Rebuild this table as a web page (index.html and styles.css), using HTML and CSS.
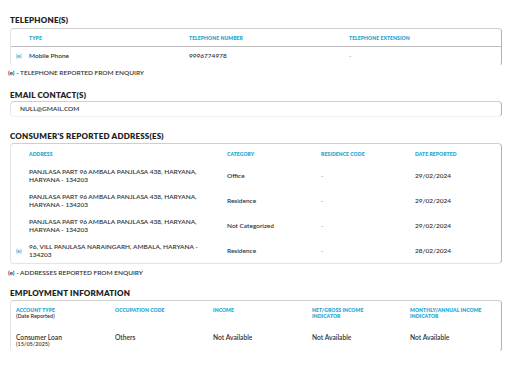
FILE: index.html
```html
<!DOCTYPE html>
<html>
<head>
<meta charset="utf-8">
<link rel="stylesheet" href="styles.css">
</head>
<body>
<div class="page">
  <h2 class="sec-title t-phone">TELEPHONE(S)</h2>
  <div class="card phone-card">
    <div class="grid phone-grid head-row sep">
      <span></span><span class="th">TYPE</span><span class="th">TELEPHONE NUMBER</span><span class="th">TELEPHONE EXTENSION</span>
    </div>
    <div class="grid phone-grid data-row">
      <span class="mark">(e)</span><span class="td">Mobile Phone</span><span class="td">9996774978</span><span class="td dash">-</span>
    </div>
  </div>
  <p class="note">(e) - TELEPHONE REPORTED FROM ENQUIRY</p>

  <h2 class="sec-title t-email">EMAIL CONTACT(S)</h2>
  <div class="card email-card">
    <span class="caps">NULL@GMAIL.COM</span>
  </div>

  <h2 class="sec-title t-addr">CONSUMER'S REPORTED ADDRESS(ES)</h2>
  <div class="card addr-card">
    <div class="grid addr-grid addr-head">
      <span></span><span class="th">ADDRESS</span><span class="th">CATEGORY</span><span class="th">RESIDENCE CODE</span><span class="th">DATE REPORTED</span>
    </div>
    <div class="grid addr-grid addr-row">
      <span></span><span class="caps addr">PANJLASA PART 96 AMBALA PANJLASA 438, HARYANA,<br>HARYANA - 134203</span><span class="td">Office</span><span class="td dash">-</span><span class="td">29/02/2024</span>
    </div>
    <div class="grid addr-grid addr-row">
      <span></span><span class="caps addr">PANJLASA PART 96 AMBALA PANJLASA 438, HARYANA,<br>HARYANA - 134203</span><span class="td">Residence</span><span class="td dash">-</span><span class="td">29/02/2024</span>
    </div>
    <div class="grid addr-grid addr-row">
      <span></span><span class="caps addr">PANJLASA PART 96 AMBALA PANJLASA 438, HARYANA,<br>HARYANA - 134203</span><span class="td">Not Categorized</span><span class="td dash">-</span><span class="td">29/02/2024</span>
    </div>
    <div class="grid addr-grid addr-row">
      <span class="mark">(e)</span><span class="caps addr">96, VILL PANJLASA NARAINGARH, AMBALA, HARYANA -<br>134203</span><span class="td">Residence</span><span class="td dash">-</span><span class="td">28/02/2024</span>
    </div>
  </div>
  <p class="note">(e) - ADDRESSES REPORTED FROM ENQUIRY</p>

  <h2 class="sec-title t-emp">EMPLOYMENT INFORMATION</h2>
  <div class="card emp-card">
    <div class="grid emp-grid emp-head">
      <div><div class="th">ACCOUNT TYPE</div><div class="sub">(Date Reported)</div></div>
      <div class="th">OCCUPATION CODE</div>
      <div class="th">INCOME</div>
      <div class="th">NET/GROSS INCOME<br>INDICATOR</div>
      <div class="th">MONTHLY/ANNUAL INCOME<br>INDICATOR</div>
    </div>
    <div class="grid emp-grid emp-row">
      <div><div class="td">Consumer Loan</div><div class="sub">(15/05/2025)</div></div>
      <div class="td">Others</div>
      <div class="td">Not Available</div>
      <div class="td">Not Available</div>
      <div class="td">Not Available</div>
    </div>
  </div>
</div>
</body>
</html>
```

FILE: styles.css
```css
* { box-sizing: border-box; }
html, body { margin: 0; padding: 0; background: #fff; }
body {
  font-family: Lato, "Noto Sans", sans-serif;
  color: #333;
  width: 512px;
  height: 387px;
  overflow: hidden;
}
.page { padding: 15px 10px 0 10px; }
.sec-title {
  margin: 0;
  font-size: 8px;
  line-height: 10px;
  font-weight: 800;
  color: #222;
  letter-spacing: 0.2px;
}
.t-email { margin-top: 13px; }
.t-addr { margin-top: 14px; }
.t-emp { margin-top: 11px; }

.card {
  border: 1px solid #e4e4e4;
  border-top-color: #cfcfcf;
  border-right-color: #b3b3b3;
  border-radius: 4px;
}
.grid { display: grid; align-items: center; }
.th {
  font-size: 5px;
  line-height: 6px;
  font-weight: 800;
  color: #1ba8d2;
  letter-spacing: 0.1px;
}
.td {
  font-size: 6.5px;
  line-height: 8px;
  font-weight: 600;
  color: #333;
}
.dash { color: #999; }
.mark {
  font-size: 5.5px;
  font-weight: 600;
  color: #1ba8d2;
}
.caps {
  font-size: 6.5px;
  line-height: 7.5px;
  font-weight: 600;
  color: #333;
}
.sub {
  font-size: 5.5px;
  line-height: 7px;
  font-weight: 600;
  color: #333;
}

.phone-card { margin-top: 3px; border-bottom-color: transparent; }
.phone-grid { grid-template-columns: 13px 160px 160px 1fr; padding-left: 5px; }
.head-row { height: 18px; }
.sep { border-bottom: 1px solid #bdbdbd; }
.data-row { height: 18px; }

.note {
  margin: 3px 0 0 -2px;
  font-size: 6.5px;
  line-height: 8px;
  font-weight: 600;
  color: #333;
}

.email-card {
  margin-top: 1px;
  height: 16px;
  padding-left: 9px;
  display: flex;
  align-items: center;
  border-bottom-color: #f0f0f0;
}

.addr-card { margin-top: 2px; }
.addr-grid { grid-template-columns: 13px 198px 94px 94px 1fr; padding-left: 5px; }
.addr-head { height: 19px; }
.addr-row { height: 25px; }
.addr-card + .note { margin-top: 5px; }

.emp-card { margin-top: 2px; padding: 6px 0 4px 5px; height: 52px; border-bottom-color: transparent; }
.emp-grid { grid-template-columns: 99px 98px 99px 98px 1fr; align-items: start; }
.emp-row { margin-top: 14px; }
.emp-row .td { font-size: 6.7px; line-height: 7px; }
```
